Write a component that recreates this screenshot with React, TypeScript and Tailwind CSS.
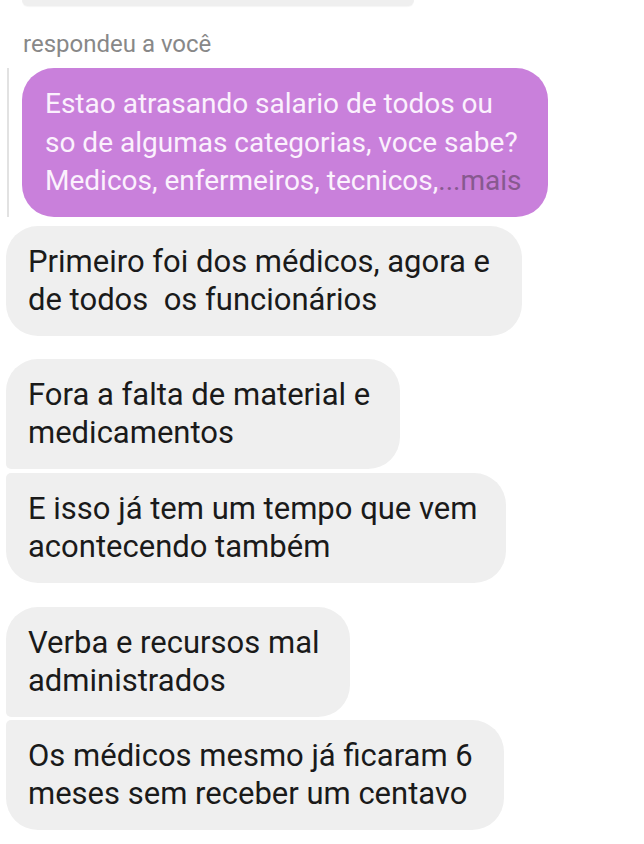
const font = { fontFamily: "Roboto, 'Liberation Sans', sans-serif" };

type Bubble = {
  lines: string[];
  width: string;
  corners: string;
  mt: string;
};

const bubbles: Bubble[] = [
  {
    lines: ["Primeiro foi dos médicos, agora e", "de todos  os funcionários"],
    width: "w-[516px]",
    corners: "rounded-[32px]",
    mt: "mt-[9px]",
  },
  {
    lines: ["Fora a falta de material e", "medicamentos"],
    width: "w-[394px]",
    corners: "rounded-[32px] rounded-bl-[5px]",
    mt: "mt-[23px]",
  },
  {
    lines: ["E isso já tem um tempo que vem", "acontecendo também"],
    width: "w-[500px]",
    corners: "rounded-[32px] rounded-tl-[5px]",
    mt: "mt-[4px]",
  },
  {
    lines: ["Verba e recursos mal", "administrados"],
    width: "w-[344px]",
    corners: "rounded-[32px] rounded-bl-[5px]",
    mt: "mt-[24px]",
  },
  {
    lines: ["Os médicos mesmo já ficaram 6", "meses sem receber um centavo"],
    width: "w-[498px]",
    corners: "rounded-[32px] rounded-tl-[5px]",
    mt: "mt-[3px]",
  },
];

export default function App() {
  return (
    <div
      className="w-[644px] h-[844px] overflow-hidden bg-white flex flex-col"
      style={font}
    >
      {/* bottom edge of the previous message */}
      <div className="ml-[22px] w-[392px] h-[6px] bg-[#efefef] rounded-b-[8px] shadow-[0_1px_1px_rgba(0,0,0,0.04)]" />

      <div className="mt-[24px] pl-[23px] text-[24px] leading-[28px] text-[#888888]">
        respondeu a você
      </div>

      {/* quoted reply */}
      <div className="mt-[10px] flex items-stretch">
        <div className="ml-[7px] w-[2px] bg-[#e2e2e2]" />
        <div className="ml-[13px] w-[526px] h-[149px] rounded-[32px] bg-[#c980db] pl-[23px] pt-[17px] text-[28px] leading-[38.5px] text-[#fbf1fd] whitespace-nowrap">
          <div>Estao atrasando salario de todos ou</div>
          <div>so de algumas categorias, voce sabe?</div>
          <div>
            Medicos, enfermeiros, tecnicos,
            <span className="text-[#87598f]">...mais</span>
          </div>
        </div>
      </div>

      {bubbles.map((b, i) => (
        <div
          key={i}
          className={`${b.mt} ${b.width} ${b.corners} ml-[6px] h-[110px] bg-[#efefef] pl-[22px] pt-[17px] text-[31px] leading-[38px] text-[#1a1a1a] whitespace-pre`}
        >
          {b.lines.map((l, j) => (
            <div key={j}>{l}</div>
          ))}
        </div>
      ))}
    </div>
  );
}
